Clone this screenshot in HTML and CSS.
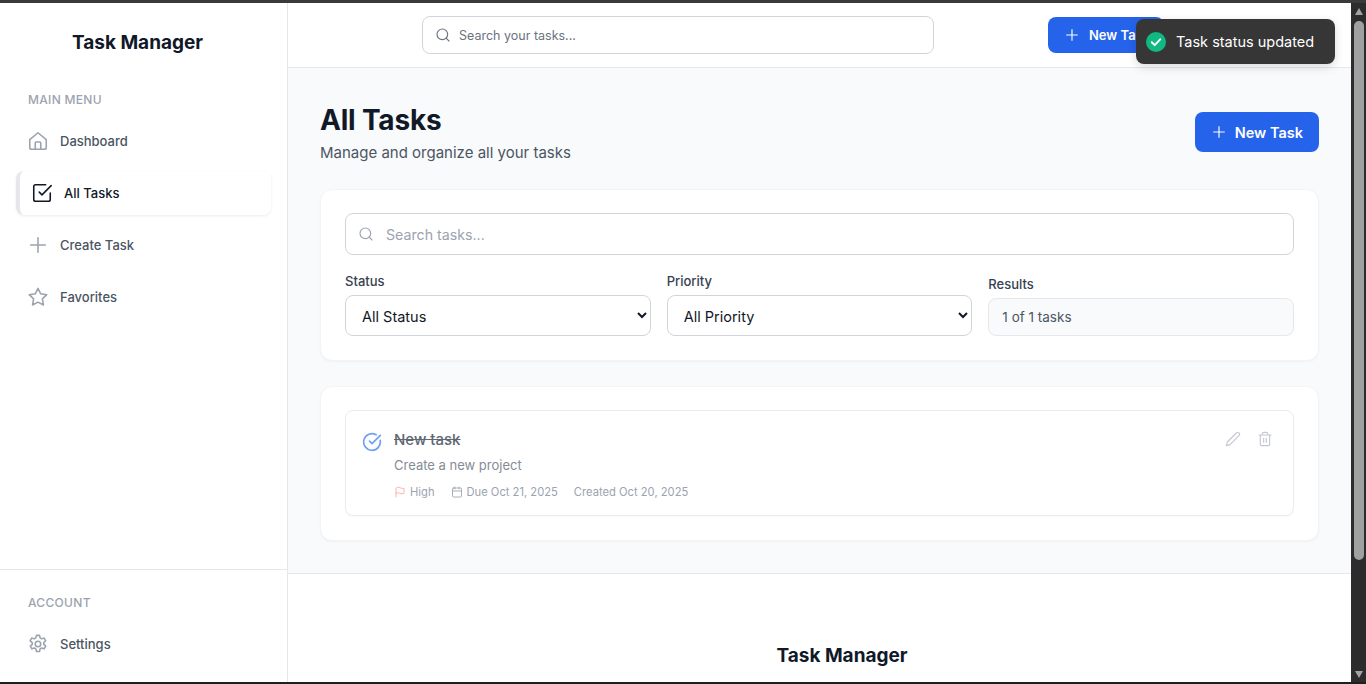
FILE: index.html
```html
<!DOCTYPE html>
<html>
	<head>
		<title>Task Manager</title>
		<link rel="stylesheet" href="styles.css">
	</head>
	<body>
		<div class="TopEdge"></div>
		<div class="Window">
			<aside class="Sidebar">
				<div class="Brand">Task Manager</div>
				<div class="MenuMain">
					<div class="MenuLabel">MAIN MENU</div>
					<a class="MenuItem">
						<svg class="Icon" viewBox="0 0 24 24"><path d="M3 10.5 12 3l9 7.5V19a2 2 0 0 1-2 2H5a2 2 0 0 1-2-2z"/><path d="M9 21v-7a1 1 0 0 1 1-1h4a1 1 0 0 1 1 1v7"/></svg>
						Dashboard
					</a>
					<a class="MenuItem Active">
						<svg class="Icon" viewBox="0 0 24 24"><path d="m9 11 3 3L22 4"/><path d="M21 12v7a2 2 0 0 1-2 2H5a2 2 0 0 1-2-2V5a2 2 0 0 1 2-2h11"/></svg>
						All Tasks
					</a>
					<a class="MenuItem">
						<svg class="Icon" viewBox="0 0 24 24"><path d="M12 4v16M4 12h16"/></svg>
						Create Task
					</a>
					<a class="MenuItem">
						<svg class="Icon" viewBox="0 0 24 24"><path d="m12 2.5 2.95 6 6.6.95-4.78 4.65 1.13 6.57L12 17.57l-5.9 3.1 1.13-6.57L2.45 9.45l6.6-.95z"/></svg>
						Favorites
					</a>
				</div>
				<div class="MenuAccount">
					<div class="MenuLabel">ACCOUNT</div>
					<a class="MenuItem">
						<svg class="Icon" viewBox="0 0 24 24"><path d="M10.3 2.6h3.4l.6 2.8 1.7 1 2.7-.9 1.7 3-2.1 1.9v2l2.1 1.9-1.7 3-2.7-.9-1.7 1-.6 2.8h-3.4l-.6-2.8-1.7-1-2.7.9-1.7-3 2.1-1.9v-2L3.4 8.5l1.7-3 2.7.9 1.7-1z"/><circle cx="12" cy="12" r="3"/></svg>
						Settings
					</a>
				</div>
			</aside>
			<div class="Main">
				<header class="Header">
					<div class="HeaderSearch">
						<svg class="Icon Small" viewBox="0 0 24 24"><circle cx="11" cy="11" r="8"/><path d="m21 21-4.3-4.3"/></svg>
						<span>Search your tasks...</span>
					</div>
					<button class="Button HeaderButton">
						<svg class="Icon Small" viewBox="0 0 24 24"><path d="M12 4v16M4 12h16"/></svg>
						New Task
					</button>
				</header>
				<main class="Content">
					<div class="PageTitleRow">
						<div class="PageTitle">
							<h1>All Tasks</h1>
							<p class="Subtitle">Manage and organize all your tasks</p>
						</div>
						<button class="Button PageButton">
							<svg class="Icon Small" viewBox="0 0 24 24"><path d="M12 4v16M4 12h16"/></svg>
							New Task
						</button>
					</div>
					<section class="Card Filters">
						<div class="SearchBox">
							<svg class="Icon Small" viewBox="0 0 24 24"><circle cx="11" cy="11" r="8"/><path d="m21 21-4.3-4.3"/></svg>
							<span>Search tasks...</span>
						</div>
						<div class="FilterRow">
							<div class="Filter">
								<label>Status</label>
								<select><option>All Status</option></select>
							</div>
							<div class="Filter">
								<label>Priority</label>
								<select><option>All Priority</option></select>
							</div>
							<div class="Filter">
								<label>Results</label>
								<div class="ResultCount">1 of 1 tasks</div>
							</div>
						</div>
					</section>
					<section class="Card TaskList">
						<div class="Task">
							<svg class="Icon TaskCheck" viewBox="0 0 24 24"><path d="M21.8 10A10 10 0 1 1 17 3.3"/><path d="m9 11 3 3L22 4"/></svg>
							<div class="TaskBody">
								<div class="TaskTitle">New task</div>
								<div class="TaskDesc">Create a new project</div>
								<div class="TaskMeta">
									<span class="MetaItem">
										<svg class="Icon Flag" viewBox="0 0 24 24"><path d="M4 22V4s2-1.5 5-1.5 5 2.5 8 2.5 3-.5 3-.5v10s-1 1-4 1-5-2-8-2-4 1-4 1"/></svg>
										High
									</span>
									<span class="MetaItem">
										<svg class="Icon Cal" viewBox="0 0 24 24"><rect x="3" y="4" width="18" height="18" rx="2"/><path d="M8 2v4M16 2v4M3 10h18"/></svg>
										Due Oct 21, 2025
									</span>
									<span class="MetaItem">Created Oct 20, 2025</span>
								</div>
							</div>
							<div class="TaskActions">
								<svg class="Icon Action" viewBox="0 0 24 24"><path d="M17 3a2.8 2.8 0 1 1 4 4L7.5 20.5 2 22l1.5-5.5z"/></svg>
								<svg class="Icon Action" viewBox="0 0 24 24"><path d="M3 6h18M19 6v14a2 2 0 0 1-2 2H7a2 2 0 0 1-2-2V6M8 6V4a2 2 0 0 1 2-2h4a2 2 0 0 1 2 2v2M10 11v6M14 11v6"/></svg>
							</div>
						</div>
					</section>
				</main>
				<footer class="Footer">
					<div class="FooterBrand">Task Manager</div>
				</footer>
			</div>
			<div class="Scrollbar">
				<div class="ArrowUp"></div>
				<div class="Thumb"></div>
				<div class="ArrowDown"></div>
			</div>
			<div class="Toast">
				<svg class="ToastIcon" viewBox="0 0 20 20"><circle cx="10" cy="10" r="10"/><path d="m5.8 10.3 2.9 2.8 5.5-5.7"/></svg>
				Task status updated
			</div>
		</div>
		<div class="BottomEdge"></div>
	</body>
</html>
```

FILE: styles.css
```css
/* Page frame */

html, body {
	margin: 0;
	height: 100%;
	overflow: hidden;
}

body {
	display: flex;
	flex-direction: column;
	font-family: "Inter", "Liberation Sans", sans-serif;
	color: #111827;
	background-color: #ffffff;
}

.TopEdge {
	height: 3px;
	background-color: #3a3a3a;
}

.BottomEdge {
	height: 2px;
	background-color: #1f1f1f;
}

.Window {
	position: relative;
	flex: 1;
	min-height: 0;
	display: flex;
}

/* Icons */

.Icon {
	flex: none;
	width: 22px;
	height: 22px;
	fill: none;
	stroke: #9ca3af;
	stroke-width: 1.7;
	stroke-linecap: round;
	stroke-linejoin: round;
}

.Icon.Small {
	width: 16px;
	height: 16px;
}

/* Sidebar */

.Sidebar {
	flex: none;
	width: 287px;
	display: flex;
	flex-direction: column;
	border-right: 1px solid #e5e7eb;
}

.Brand {
	padding: 28px 12px 0 0;
	font-size: 19px;
	line-height: 24px;
	font-weight: 700;
	text-align: center;
}

.MenuMain {
	flex: 1;
	padding: 37px 16px 0;
}

.MenuLabel {
	padding-left: 12px;
	font-size: 12px;
	line-height: 16px;
	font-weight: 500;
	letter-spacing: 0.3px;
	color: #9ca3af;
	margin-bottom: 11px;
}

.MenuItem {
	box-sizing: border-box;
	display: flex;
	align-items: center;
	gap: 11px;
	height: 44px;
	width: 255px;
	margin-bottom: 8px;
	padding-left: 11px;
	font-size: 13px;
	font-weight: 500;
	color: #4b5563;
}

.MenuItem.Active {
	color: #111827;
	background-color: #ffffff;
	border-left: 4px solid #e5e7eb;
	border-radius: 8px;
	box-shadow: 0 1px 3px rgba(0, 0, 0, 0.08);
}

.MenuItem.Active .Icon {
	stroke: #111827;
}

.MenuAccount {
	height: 113px;
	box-sizing: border-box;
	padding: 25px 16px 0;
	border-top: 1px solid #e5e7eb;
}

/* Main column */

.Main {
	flex: 1;
	min-width: 0;
	overflow: hidden;
}

.Header {
	box-sizing: border-box;
	height: 65px;
	display: flex;
	align-items: center;
	padding: 0 0 1px 134px;
	background-color: #ffffff;
	border-bottom: 1px solid #e5e7eb;
	box-shadow: 0 1px 2px rgba(0, 0, 0, 0.04);
}

.HeaderSearch {
	box-sizing: border-box;
	width: 512px;
	height: 38px;
	display: flex;
	align-items: center;
	gap: 8px;
	padding: 1px 0 0 12px;
	border: 1px solid #d1d5db;
	border-radius: 8px;
	font-size: 12.5px;
	color: #6b7280;
}

.HeaderSearch .Icon {
	stroke: #6b7280;
}

.Button {
	display: flex;
	align-items: center;
	border: 0;
	color: #ffffff;
	background-color: #2563eb;
	font-family: inherit;
	font-weight: 600;
}

.Button .Icon {
	stroke: #ffffff;
}

.HeaderButton {
	width: 116px;
	height: 36px;
	margin-left: 114px;
	padding: 0 0 0 16px;
	gap: 9px;
	border-radius: 8px;
	font-size: 13px;
	white-space: nowrap;
}

.Content {
	height: 506px;
	box-sizing: border-box;
	padding: 32px 32px 0;
	background-color: #f9fafb;
	border-bottom: 1px solid #e5e7eb;
}

.PageTitleRow {
	display: flex;
	justify-content: space-between;
	align-items: center;
	height: 64px;
	margin-bottom: 25px;
}

.PageTitle {
	padding-top: 3px;
}

h1 {
	margin: 0;
	font-size: 28px;
	line-height: 36px;
	font-weight: 700;
	letter-spacing: -0.2px;
}

.Subtitle {
	margin: 3px 0 0;
	font-size: 15px;
	line-height: 24px;
	color: #4b5563;
}

.PageButton {
	height: 40px;
	padding: 0 16px;
	gap: 8px;
	border-radius: 8px;
	font-size: 14.5px;
}

.Card {
	box-sizing: border-box;
	width: 999px;
	background-color: #ffffff;
	border: 1px solid #f3f4f6;
	border-radius: 12px;
	box-shadow: 0 1px 2px rgba(0, 0, 0, 0.04);
}

.Filters {
	height: 172px;
	padding: 23px 24px 0;
	margin-bottom: 25px;
}

.SearchBox {
	box-sizing: border-box;
	height: 42px;
	display: flex;
	align-items: center;
	gap: 12px;
	padding-left: 12px;
	border: 1px solid #d1d5db;
	border-radius: 8px;
	font-size: 14.2px;
	color: #9ca3af;
}

.FilterRow {
	display: flex;
	align-items: flex-end;
	gap: 16px;
	margin-top: 16px;
}

.Filter {
	flex: 1;
	min-width: 0;
}

.Filter label {
	display: block;
	font-size: 13px;
	line-height: 20px;
	font-weight: 500;
	color: #374151;
	margin-bottom: 4px;
}

.Filter select {
	box-sizing: border-box;
	width: 100%;
	height: 41px;
	padding: 2px 12px 0;
	background-color: #ffffff;
	border: 1px solid #d1d5db;
	border-radius: 8px;
	font-family: inherit;
	font-size: 14.5px;
	color: #111827;
}

.ResultCount {
	box-sizing: border-box;
	height: 38px;
	display: flex;
	align-items: center;
	padding-left: 13px;
	background-color: #f9fafb;
	border: 1px solid #e5e7eb;
	border-radius: 8px;
	font-size: 13.5px;
	color: #4b5563;
}

/* Task card */

.TaskList {
	height: 155px;
	padding: 23px 24px;
}

.Task {
	box-sizing: border-box;
	height: 106px;
	display: flex;
	padding: 17px 20px 17px 16px;
	border: 1px solid #e9ebee;
	border-radius: 8px;
	box-shadow: 0 1px 2px rgba(0, 0, 0, 0.03);
}

.TaskCheck {
	width: 20px;
	height: 20px;
	margin: 4px 12px 0 0;
	stroke: #6fa0f5;
	stroke-width: 2;
}

.TaskBody {
	flex: 1;
}

.TaskTitle {
	font-size: 15px;
	line-height: 24px;
	font-weight: 500;
	color: #5f6773;
	text-decoration: line-through;
}

.TaskDesc {
	margin-top: 3px;
	font-size: 13px;
	line-height: 20px;
	color: #868c97;
}

.TaskMeta {
	display: flex;
	gap: 16px;
	margin-top: 9px;
	font-size: 11.2px;
	line-height: 16px;
	color: #9ca3af;
}

.MetaItem {
	display: flex;
	align-items: center;
	gap: 4px;
}

.Flag {
	width: 12px;
	height: 12px;
	stroke: #f8a5a5;
}

.Cal {
	width: 12px;
	height: 12px;
	stroke: #9ca3af;
}

.TaskActions {
	display: flex;
	gap: 16px;
	height: 16px;
	margin-top: 3px;
}

.Action {
	width: 16px;
	height: 16px;
	stroke: #c3c7cf;
}

.Footer {
	height: 120px;
	background-color: #ffffff;
	padding: 70px 0 0 45px;
	box-sizing: border-box;
}

.FooterBrand {
	font-size: 19px;
	line-height: 24px;
	font-weight: 700;
	text-align: center;
}

/* Scrollbar, drawn because the page itself does not scroll */

.Scrollbar {
	flex: none;
	width: 15px;
	display: flex;
	flex-direction: column;
	align-items: center;
	background-color: #2c2c2c;
}

.ArrowUp, .ArrowDown {
	width: 0;
	height: 0;
	border-left: 4.5px solid transparent;
	border-right: 4.5px solid transparent;
}

.ArrowUp {
	margin-top: 5px;
	border-bottom: 7px solid #a3a3a3;
}

.ArrowDown {
	margin-top: auto;
	margin-bottom: 4px;
	border-top: 7px solid #a3a3a3;
}

.Thumb {
	width: 10px;
	height: 539px;
	margin-top: 6px;
	background-color: #a0a0a0;
	border-radius: 5px;
}

/* Toast sits over the header */

.Toast {
	position: absolute;
	top: 16px;
	left: 1136px;
	box-sizing: border-box;
	width: 199px;
	height: 45px;
	display: flex;
	align-items: center;
	gap: 10px;
	padding-left: 10px;
	background-color: #363636;
	border-radius: 8px;
	box-shadow: 0 3px 10px rgba(0, 0, 0, 0.15);
	font-size: 14.5px;
	color: #ffffff;
}

.ToastIcon {
	flex: none;
	width: 20px;
	height: 20px;
}

.ToastIcon circle {
	fill: #10b981;
}

.ToastIcon path {
	fill: none;
	stroke: #ffffff;
	stroke-width: 2;
	stroke-linecap: round;
	stroke-linejoin: round;
}
```
